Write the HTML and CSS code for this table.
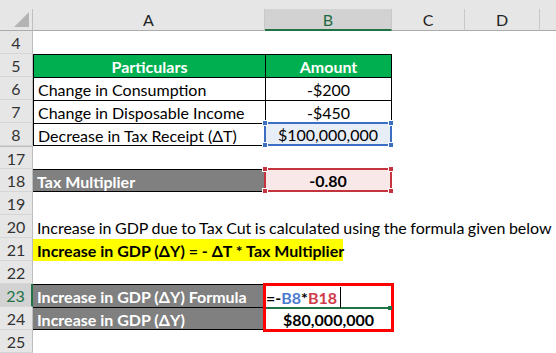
FILE: index.html
```html
<!DOCTYPE html>
<html>
<head>
<meta charset="utf-8">
<link rel="stylesheet" href="styles.css">
</head>
<body>
<div class="sheet">
  <div class="corner"><div class="inner"><span class="tri"></span></div></div>
  <div class="colh"><span>A</span></div>
  <div class="colh sel"><span>B</span></div>
  <div class="colh"><span>C</span></div>
  <div class="colh"><span>D</span></div>
  <div class="colh"><span class="last"></span></div>

  <div class="rh">4</div><div class="blank"></div>

  <div class="rh">5</div>
  <div class="c hd bl bt">Particulars</div>
  <div class="c hd bl bt br">Amount</div>
  <div class="blank2"></div>

  <div class="rh">6</div>
  <div class="c bl bt">Change in Consumption</div>
  <div class="c ctr bl bt br">-$200</div>
  <div class="blank2"></div>

  <div class="rh">7</div>
  <div class="c bl bt">Change in Disposable Income</div>
  <div class="c ctr bl bt br">-$450</div>
  <div class="blank2"></div>

  <div class="rh">8</div>
  <div class="c bl bt bb">Decrease in Tax Receipt (ΔT)</div>
  <div class="c ctr ref blue">$100,000,000<i class="h tl"></i><i class="h tr"></i><i class="h bl2"></i><i class="h br2"></i></div>
  <div class="blank2"></div>

  <div class="rh hidden">17</div><div class="blank"></div>

  <div class="rh">18</div>
  <div class="c gray bt bb">Tax Multiplier</div>
  <div class="c ctr b ref red">-0.80<i class="h tl"></i><i class="h tr"></i><i class="h bl2"></i><i class="h br2"></i></div>
  <div class="blank2"></div>

  <div class="rh">19</div><div class="blank"></div>

  <div class="rh">20</div>
  <div class="c wide tight">Increase in GDP due to Tax Cut is calculated using the formula given below</div>

  <div class="rh">21</div>
  <div class="c wide"><span class="yellow">Increase in GDP (ΔY) = - ΔT * Tax Multiplier</span></div>

  <div class="rh">22</div><div class="blank"></div>

  <div class="rh selrow">23</div>
  <div class="c gray bt">Increase in GDP (ΔY) Formula</div>
  <div class="result">
    <div class="edit"><span>=-</span><span class="fb">B8</span><span>*</span><span class="fr">B18</span><span class="cursor"></span><i class="gh"></i></div>
    <div class="val">$80,000,000</div>
  </div>
  <div class="blank2"></div>

  <div class="rh">24</div>
  <div class="c gray bt bb">Increase in GDP (ΔY)</div>
  <div class="blank2"></div>

  <div class="rh">25</div><div class="blank"></div>
</div>
</body>
</html>
```
FILE: styles.css
```css
* { box-sizing: border-box; margin: 0; padding: 0; }
body {
  margin: 0;
  background: #fff;
  font-family: "Lato", "Liberation Sans", sans-serif;
  font-size: 16px;
  color: #000;
  width: 556px;
  height: 353px;
  overflow: hidden;
}
.sheet {
  display: grid;
  grid-template-columns: 33px 232px 127px 73px 75px 16px;
  grid-template-rows: 31px repeat(14, 23px);
}
.corner { background: #e6e6e6; padding-top: 9px; }
.corner .inner {
  height: 22px;
  border-right: 1px solid #bfbfbf;
  border-bottom: 1px solid #ababab;
  display: flex;
  align-items: flex-end;
  justify-content: flex-end;
  padding: 0 3px 3px 0;
}
.tri {
  width: 0; height: 0;
  border-left: 15px solid transparent;
  border-bottom: 15px solid #b4b4b4;
}
.colh { background: #e6e6e6; padding-top: 9px; }
.colh span {
  display: flex;
  height: 22px;
  align-items: center;
  justify-content: center;
  border-right: 1px solid #c8c8c8;
  border-bottom: 1px solid #ababab;
  color: #222;
  font-size: 16px;
}
.colh.sel span {
  background: #d2d2d2;
  color: #1e6b41;
  border-bottom: 2px solid #217346;
}
.colh span.last { border-right: none; }
.rh {
  grid-column: 1;
  background: #e6e6e6;
  border-right: 1px solid #bdbdbd;
  border-bottom: 1px solid #d6d6d6;
  display: flex;
  align-items: center;
  justify-content: center;
  color: #333;
  font-size: 16px;
  padding-top: 1px;
}
.rh.hidden { border-top: 1px solid #bdbdbd; }
.rh.selrow {
  background: #d2d2d2;
  color: #217346;
  border-right: 2px solid #217346;
}
.blank { grid-column: 2 / -1; }
.blank2 { grid-column: 4 / -1; }
.c {
  display: flex;
  align-items: center;
  padding: 1px 4px 0;
  white-space: nowrap;
  position: relative;
}
.ctr { justify-content: center; }
.b { font-weight: 700; }
.bl { border-left: 1px solid #000; }
.br { border-right: 1px solid #000; }
.bt { border-top: 1px solid #000; }
.bb { border-bottom: 1px solid #000; }
.hd {
  background: #00b050;
  color: #fff;
  font-weight: 700;
  justify-content: center;
}
.gray {
  background: #808080;
  color: #fff;
  font-weight: 700;
}
.wide { grid-column: 2 / -1; overflow: visible; }
.tight { word-spacing: -0.6px; }
.yellow {
  background: #ffff00;
  font-weight: 700;
  display: flex;
  align-items: center;
  height: 22px;
  margin-left: -4px;
  padding: 0 4px;
  width: 310px;
}
.ref { border: 2px solid; margin: -1px 0 0 -1px; }
.ref.blue { border-color: #3b6fc4; background: #e8eef8; }
.ref.red { border-color: #c4343f; background: #f8e8e8; }
.h {
  position: absolute;
  width: 6px; height: 6px;
}
.ref.blue .h { background: #3b6fc4; border: 1px solid #fff; }
.ref.red .h { background: #c4343f; border: 1px solid #fff; }
.h.tl { left: -4px; top: -4px; }
.h.tr { right: -4px; top: -4px; }
.h.bl2 { left: -4px; bottom: -4px; }
.h.br2 { right: -4px; bottom: -4px; }
.result {
  grid-column: 3;
  grid-row: span 2;
  margin: -1px -2px -2px -2px;
  border: 3px solid #ff0000;
  display: flex;
  flex-direction: column;
  background: #fff;
  z-index: 1;
}
.edit {
  height: 23px;
  display: flex;
  align-items: center;
  font-weight: 700;
  padding: 1px 0 0 0;
  border-bottom: 2px solid #217346;
  position: relative;
}
.fb { color: #4a7bd0; }
.fr { color: #d03a4a; }
.cursor {
  width: 1px;
  height: 21px;
  background: #000;
  margin-left: 3px;
}
.gh {
  position: absolute;
  right: -1px;
  bottom: -3px;
  width: 4px;
  height: 4px;
  background: #217346;
}
.val {
  flex: 1;
  display: flex;
  align-items: center;
  justify-content: center;
  font-weight: 700;
}
```
